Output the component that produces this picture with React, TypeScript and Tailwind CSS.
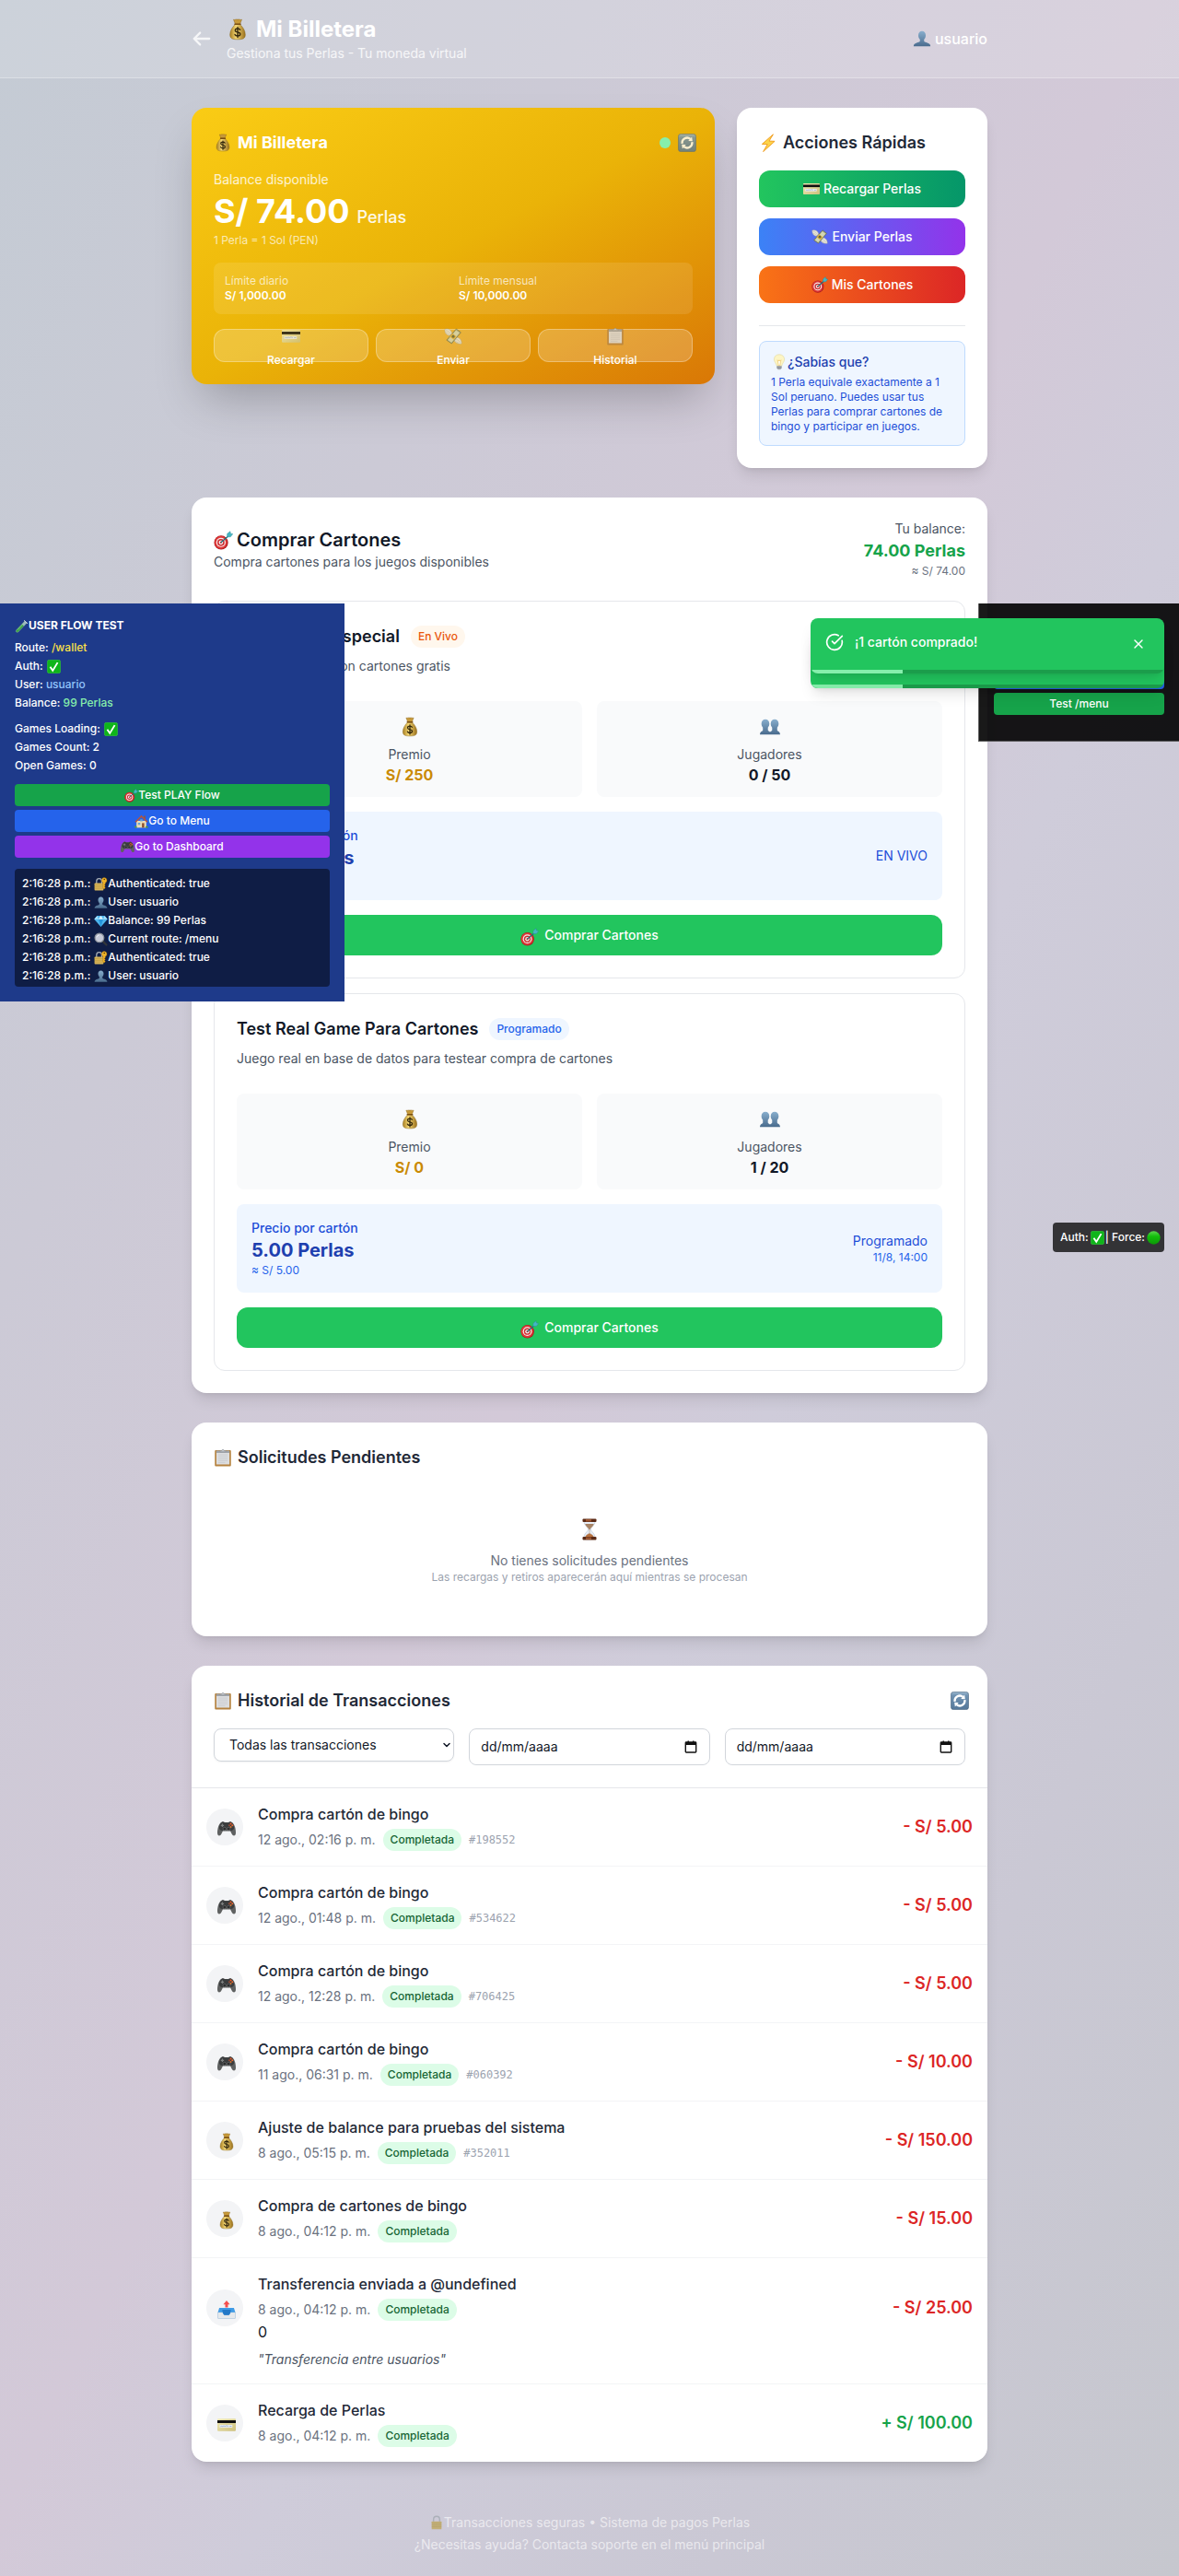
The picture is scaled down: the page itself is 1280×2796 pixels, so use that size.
import { useId, type ReactNode } from "react";
import { ChevronDown, CircleCheckBig, X } from "lucide-react";

type IconName =
  | "bag" | "card" | "wings" | "clipboard" | "refresh" | "target" | "zap" | "bulb"
  | "person" | "people" | "hourglass" | "gamepad" | "outbox" | "lock" | "lockKey"
  | "gem" | "search" | "house" | "tube" | "check" | "green";

const head = "M12 2.200c2.900 0 4.800 2.200 4.800 5.400 0 2.300-.9 4.300-2.100 5.400v2.100c0 .8 1.200 1.300 3.600 2.100 3 1 4.700 2.200 4.700 4.800H1c0-2.600 1.700-3.800 4.700-4.800 2.400-.8 3.600-1.300 3.600-2.100V13c-1.200-1.100-2.100-3.100-2.100-5.400 0-3.200 1.900-5.400 4.800-5.400z";

function drawing(name: IconName, id: string): ReactNode {
  const fill = `url(#${id})`;
  switch (name) {
    case "bag":
      return (
        <>
          <defs>
            <linearGradient id={id} x1="0" x2="1">
              <stop offset="0" stopColor="#a87f22" />
              <stop offset="0.4" stopColor="#f5d774" />
              <stop offset="1" stopColor="#9a701c" />
            </linearGradient>
          </defs>
          <path d="M7.500 1.200c1.500.700 2.500-.600 4.500 0 2-.600 3 .700 4.500 0l-2 5h-5z" fill="#c79a3a" stroke="#8d6519" strokeWidth=".5" />
          <path d="M9.300 6.500h5.400c3 3 5.600 6.800 5.600 11 0 4-2 5.300-8.300 5.300S3.700 21.500 3.700 17.500c0-4.200 2.600-8 5.600-11z" fill={fill} stroke="#8a6a1f" strokeWidth=".5" />
          <path d="M9 6.300h6" stroke="#7a4f12" strokeWidth="1.600" strokeLinecap="round" />
          <path d="M14.600 12.300c-.5-1-1.500-1.300-2.600-1.300-1.500 0-2.700.7-2.700 2 0 2.900 5.500 1.200 5.500 4 0 1.300-1.200 2.100-2.800 2.100-1.400 0-2.500-.5-2.900-1.600M12 9.600v11" fill="none" stroke="#33270c" strokeWidth="1.400" strokeLinecap="round" />
        </>
      );
    case "card":
      return (
        <>
          <defs>
            <linearGradient id={id} x1="0" y1="0" x2="1" y2="1">
              <stop offset="0" stopColor="#efe9b6" />
              <stop offset="1" stopColor="#cdc07c" />
            </linearGradient>
          </defs>
          <rect x="0" y="4" width="24" height="16" rx="1" fill={fill} />
          <path d="M0 6h24v3.500H0z" fill="#101010" />
          <rect x="3" y="12" width="16.500" height="3.500" fill="#e9edf2" />
          <path d="M4 14.200c1.500-1.500 2 .5 3.500-.5s2 .8 3.500-.3 2 .9 3.500 0M16 13.800h2.500" fill="none" stroke="#7f9cc4" strokeWidth=".8" />
        </>
      );
    case "wings":
      return (
        <>
          <path d="M1 3c4-1.500 8.500 0 9.500 6l-3.500 2C3 10.500 1 7.500 1 3z" fill="#e6e4da" stroke="#a9a794" strokeWidth=".6" />
          <path d="M2.500 4.500c3 .3 5 2 6.500 5M2.500 7c2 .5 3.500 1.500 5 3.300" fill="none" stroke="#b5b3a2" strokeWidth=".6" />
          <path d="M13.500 14c5-2 9.500 1.500 9.500 7.500-5 1-9-1-10.500-5.500z" fill="#e6e4da" stroke="#a9a794" strokeWidth=".6" />
          <path d="M14.500 15.500c3 .3 5.500 2.500 6.500 5M14 17.500c1.500 1.500 3 2.500 5 3" fill="none" stroke="#b5b3a2" strokeWidth=".6" />
          <path d="M16 2.500l6 4.500L10 21.500 3.500 17z" fill="#a9ad80" stroke="#5f6544" strokeWidth=".8" />
          <path d="M15.700 4.200l4.600 3.400L9.700 20l-4.500-3.300z" fill="#d3d6b4" />
          <path d="M11 8.200l5.300 4-3.500 4.300-5.400-4z" fill="#e0b440" />
          <circle cx="12" cy="12.200" r="1.900" fill="#62643d" />
        </>
      );
    case "clipboard":
      return (
        <>
          <rect x="1.500" y="2.500" width="21" height="21" rx="1.200" fill="#b5823e" />
          <path d="M3.500 4h17v17h-17z" fill="#dcdddf" />
          <path d="M6 8.500h12M6 11h12M6 13.500h12M6 16h12M6 18.500h9" stroke="#c6c9cd" strokeWidth=".9" />
          <path d="M3.500 3h17v3h-17z" fill="#9fa4aa" />
          <path d="M8.500 4.500V3h2a1.500 1.500 0 013 0h2v1.500z" fill="#c4c8cd" stroke="#80858c" strokeWidth=".5" />
        </>
      );
    case "refresh":
      return (
        <>
          <defs>
            <linearGradient id={id} x1="0" y1="0" x2="0" y2="1">
              <stop offset="0" stopColor="#9db9d0" />
              <stop offset="0.200" stopColor="#6f92b2" />
              <stop offset="1" stopColor="#547799" />
            </linearGradient>
          </defs>
          <rect x=".5" y=".5" width="23" height="23" rx="3.500" fill={fill} stroke="#4b6680" strokeWidth=".8" />
          <path d="M5.500 13a6.600 6.600 0 0110.700-6M18.500 11a6.600 6.600 0 01-10.700 6" fill="none" stroke="#fff" strokeWidth="2.700" />
          <path d="M13.500 9.700L19 10l-.8-5.800zM10.500 14.300L5 14l.8 5.800z" fill="#fff" />
        </>
      );
    case "target":
      return (
        <>
          <circle cx="9.200" cy="14.800" r="8.700" fill="#a81a1f" />
          <circle cx="8.900" cy="14.600" r="7.900" fill="#e03a3a" />
          <circle cx="9" cy="14.600" r="5.800" fill="#f5efee" />
          <circle cx="9" cy="14.600" r="4.400" fill="#cf2a2e" />
          <circle cx="9" cy="14.600" r="2.700" fill="#f5efee" />
          <circle cx="9" cy="14.600" r="1.200" fill="#c22126" />
          <path d="M9 14.600L19 6" stroke="#21717c" strokeWidth="1.500" />
          <path d="M16.600 7.800l.2-4L20.500.8l.5 2.800 2.800.5-3 3.600z" fill="#45b6c3" stroke="#2c8793" strokeWidth=".5" />
        </>
      );
    case "zap":
      return <path d="M18.500 1L4 13.700l7 .3L5.500 23.500 20.500 10l-7.300-.3z" fill="#fcd34b" stroke="#f09a1c" strokeWidth="1.100" strokeLinejoin="round" />;
    case "bulb":
      return (
        <>
          <path d="M12 1c4.700 0 7.500 3.200 7.500 7.200 0 3.600-3.200 5.400-3.800 9.300H8.300c-.6-3.900-3.800-5.700-3.800-9.300C4.500 4.200 7.300 1 12 1z" fill="#fdf5c4" stroke="#dcd49a" strokeWidth=".7" />
          <path d="M9.500 9l1.500 8h2l1.500-8-1.500 1.500L12 9l-1 1.500z" fill="#fffef0" stroke="#e6b54d" strokeWidth=".7" />
          <path d="M8.500 17.500h7v3.200L13.700 23h-3.400l-1.800-2.300z" fill="#aeb2b8" />
          <path d="M8.500 18.700h7M8.800 20.600h6.400" stroke="#6d7278" strokeWidth=".7" />
        </>
      );
    case "person":
    case "people":
      return (
        <>
          <defs>
            <linearGradient id={id} x1="0" y1="0" x2="0" y2="1">
              <stop offset="0" stopColor="#88aecd" />
              <stop offset="1" stopColor="#496b8d" />
            </linearGradient>
          </defs>
          {name === "person" ? (
            <path d={head} fill={fill} />
          ) : (
            <path d="M6.500 3c2.700 0 4.700 1.800 4.700 5.200 0 2-.8 3.500-1.700 4.500v3c0 1 1.500 1.500 2.500 2.300 1-.8 2.500-1.300 2.500-2.300v-3c-.9-1-1.700-2.500-1.700-4.500C12.800 4.800 14.800 3 17.500 3s4.700 1.800 4.700 5.200c0 2-.8 3.500-1.700 4.500v3c0 1.300 3.500 1.500 3.500 5.300H0c0-3.800 3.500-4 3.500-5.300v-3c-.9-1-1.700-2.500-1.700-4.500C1.800 4.800 3.800 3 6.500 3z" fill={fill} />
          )}
        </>
      );
    case "hourglass":
      return (
        <>
          <path d="M6 3h12c0 5-4.500 6.500-4.500 9S18 16 18 21H6c0-5 4.500-6.500 4.500-9S6 8 6 3z" fill="#e8eff8" stroke="#b8c3d2" strokeWidth=".6" />
          <path d="M7.200 6h9.600c-.8 3-3.600 4.200-4.400 6.200h-.8C10.800 10.200 8 9 7.200 6z" fill="#a78466" />
          <path d="M12 12v4.500c2.300.7 4 2 4.500 4h-9c.5-2 2.200-3.300 4.500-4" fill="#b9713c" stroke="#9b6640" strokeWidth=".4" />
          <rect x="4.500" y=".5" width="15" height="3.500" rx="1" fill="#5b2b16" />
          <path d="M8 1v2.500h6V1z" fill="#9a5430" />
          <rect x="4.500" y="20" width="15" height="3.500" rx="1" fill="#5b2b16" />
          <path d="M8 20.500V23h6v-2.500z" fill="#9a5430" />
        </>
      );
    case "gamepad":
      return (
        <>
          <path d="M5 3.500c1.500-1.500 3.500-1 4.500 0h5c1-1 3-1.500 4.500 0 3.500 2 5 9 5 13.500 0 4.500-3.300 5-5.100 2l-2-4H7.100l-2 4C3.300 22 0 21.500 0 17 0 12.500 1.500 5.500 5 3.500z" fill="#5f6161" />
          <path d="M5.500 3.600c1.300-1 3-.7 4 .4h5c1-1.100 2.700-1.400 4-.4 1.900 1 3.100 4.700 3.300 7.700-2 3.500-4.300 3.500-6.300 2.200h-7c-2 1.300-4.300 1.300-6.300-2.200.2-3 1.400-6.700 3.300-7.700z" fill="#3a3c3d" />
          <path d="M6.500 5.500v4M4.500 7.500h4" stroke="#7d8080" strokeWidth="1.500" />
          <circle cx="17.500" cy="5.500" r="1.200" fill="#ef5a24" />
          <circle cx="17.500" cy="9.500" r="1.200" fill="#d8752f" />
          <circle cx="15.500" cy="7.500" r="1.200" fill="#9a4a36" />
          <circle cx="19.500" cy="7.500" r="1.200" fill="#f0672f" />
          <circle cx="9.300" cy="12" r="2.100" fill="#2a2b2c" stroke="#7b7d7e" strokeWidth=".6" />
          <circle cx="14.700" cy="12" r="2.100" fill="#2a2b2c" stroke="#7b7d7e" strokeWidth=".6" />
        </>
      );
    case "outbox":
      return (
        <>
          <path d="M2.500 9.500h19L23.500 16v6.500a1 1 0 01-1 1h-21a1 1 0 01-1-1V16z" fill="#3f9be6" />
          <path d="M.5 15.500h6c1 0 1.500 3.500 3 3.500h5c1.500 0 2-3.500 3-3.500h6v7a1 1 0 01-1 1h-21a1 1 0 01-1-1z" fill="#e6e9ec" stroke="#c7ccd1" strokeWidth=".4" />
          <path d="M6.500 12h11c0 3-1.500 7-3 7h-5c-1.500 0-3-4-3-7z" fill="#2378c7" />
          <path d="M12 0l4.300 5.200h-2.500V9h-3.600V5.200H7.700z" fill="#f5504e" />
        </>
      );
    case "lock":
      return (
        <>
          <path d="M7 11V7a5 5 0 0110 0v4" fill="none" stroke="#9fa6ad" strokeWidth="2.200" />
          <rect x="4" y="10" width="16" height="13" rx="1" fill="#bfa550" />
          <path d="M4 13h16M4 16h16M4 19h16" stroke="#9c812e" strokeWidth=".6" />
        </>
      );
    case "lockKey":
      return (
        <>
          <path d="M4.500 11V7a4.500 4.500 0 019 0v4" fill="none" stroke="#aab1b8" strokeWidth="2" />
          <rect x="1" y="10.500" width="15.500" height="12.500" rx="1" fill="#d9b65a" />
          <path d="M1 13.500h15.500M1 16.500h15.500M1 19.500h15.500" stroke="#a98733" strokeWidth=".7" />
          <path d="M18 .8a4.700 4.700 0 011.700 9V12l-1.500 1.500 1.500 1.700-1.500 1.600 1.500 1.700-2.200 2.500-2-2.200V9.500A4.700 4.700 0 0118 .8z" fill="#f0b429" stroke="#a46f0c" strokeWidth=".6" />
          <circle cx="18" cy="4" r="1.300" fill="#5c3d08" />
        </>
      );
    case "gem":
      return (
        <>
          <path d="M5.500 3h13L23.500 9 12 22.500.5 9z" fill="#4eb5ec" />
          <path d="M5.500 3L8 9l4-6 4 6 2.500-6L23.500 9H.5z" fill="#a8e0fb" />
          <path d="M8 9h8l-4 13.500z" fill="#2596dc" />
          <path d="M12 3l4 6H8z" fill="#d8f2fe" />
        </>
      );
    case "search":
      return (
        <>
          <path d="M15 15l6.500 6.500" stroke="#31353a" strokeWidth="3.600" strokeLinecap="round" />
          <circle cx="9.500" cy="9.500" r="7.800" fill="#c7cad8" stroke="#8b9199" strokeWidth="1.800" />
          <path d="M5 8.500a5 5 0 014-3.700" fill="none" stroke="#f1f3f8" strokeWidth="1.300" />
        </>
      );
    case "house":
      return (
        <>
          <path d="M3.500 11h17v12h-17z" fill="#ecdcb4" />
          <path d="M16.500 2.500h2.500v6l-2.500-2.300z" fill="#96543c" />
          <path d="M.8 12.500L12 1l11.200 11.500-1.700 1.300L12 4.700l-9.500 9.100z" fill="#b5533c" />
          <path d="M13 15h4v8h-4z" fill="#8a4f2e" />
          <path d="M6 14.500h4V18H6zM10 8.500h4V12h-4z" fill="#69a3cf" />
          <path d="M.5 20.500c1.500-2 3.500-1 4 2.500h-4zM19 23c0-3 2.500-4 4.500-2v2z" fill="#5a9a41" />
        </>
      );
    case "tube":
      return (
        <>
          <path d="M17.500 3.500l3.500 3L6 22.300c-2.500 1.700-5-.5-3.500-3z" fill="#3aa345" stroke="#93b8a0" strokeWidth=".8" />
          <path d="M17.500 3.500l3.500 3-5 5.300-3.500-3z" fill="#9db9bf" />
          <path d="M16.500 2.500L22 7.300" stroke="#d3dce2" strokeWidth="1.600" strokeLinecap="round" />
          <path d="M5 18.500l9-9.500" stroke="#a6eaa9" strokeWidth=".9" />
        </>
      );
    case "check":
      return (
        <>
          <rect x=".5" y=".5" width="23" height="23" rx="3.500" fill="#0fb51a" stroke="#3acb43" strokeWidth=".9" />
          <path d="M5.500 12.500l4.500 6.500 8.500-14" fill="none" stroke="#fff" strokeWidth="3" />
        </>
      );
    case "green":
      return (
        <>
          <defs>
            <linearGradient id={id} x1="0" y1="0" x2="0" y2="1">
              <stop offset="0" stopColor="#5bd44e" />
              <stop offset="0.400" stopColor="#12bd0b" />
              <stop offset="1" stopColor="#0c9807" />
            </linearGradient>
          </defs>
          <circle cx="12" cy="12" r="11.500" fill={fill} />
        </>
      );
  }
}

function Icon({ name, className }: { name: IconName; className: string }) {
  const id = useId();
  return (
    <svg viewBox="0 0 24 24" aria-hidden="true" className={`inline-block shrink-0 ${className}`}>
      {drawing(name, id)}
    </svg>
  );
}

const walletActions: { icon: IconName; label: string }[] = [
  { icon: "card", label: "Recargar" },
  { icon: "wings", label: "Enviar" },
  { icon: "clipboard", label: "Historial" },
];

function WalletCard() {
  return (
    <section className="rounded-2xl bg-[linear-gradient(to_bottom_right,#facc15,#eab308_50%,#d97706)] p-6 text-white shadow-2xl lg:col-span-2">
      <div className="flex items-center justify-between">
        <h2 className="flex items-center gap-1.5 text-lg font-bold">
          <Icon name="bag" className="size-5" />
          Mi Billetera
        </h2>
        <div className="-mr-1 flex items-center gap-2">
          <span className="size-3 rounded-full bg-[#86efac]" />
          <button type="button" aria-label="Actualizar balance" className="flex opacity-80">
            <Icon name="refresh" className="size-5" />
          </button>
        </div>
      </div>
      <p className="mt-4 text-sm text-white/80">Balance disponible</p>
      <p className="mt-1 flex h-10 items-baseline gap-2 text-4xl font-bold">
        S/ 74.00 <span className="text-lg font-medium text-white/90">Perlas</span>
      </p>
      <p className="mt-1 text-xs text-white/70">1 Perla = 1 Sol (PEN)</p>
      <dl className="mt-4 grid grid-cols-2 gap-3 rounded-lg bg-white/10 p-3 text-xs">
        <div>
          <dt className="text-white/70">Límite diario</dt>
          <dd className="font-semibold">S/ 1,000.00</dd>
        </div>
        <div>
          <dt className="text-white/70">Límite mensual</dt>
          <dd className="font-semibold">S/ 10,000.00</dd>
        </div>
      </dl>
      <div className="mt-4 grid grid-cols-3 gap-2">
        {walletActions.map((a) => (
          <button key={a.label} type="button" className="flex h-9 flex-col items-center justify-center gap-1 rounded-xl border border-white/30 bg-white/20 text-xs font-medium">
            <span className="flex h-7 shrink-0 items-center opacity-80">
              <Icon name={a.icon} className="size-5" />
            </span>
            <span className="shrink-0">{a.label}</span>
          </button>
        ))}
      </div>
    </section>
  );
}

const quickActions: { icon: IconName; label: string; color: string }[] = [
  { icon: "card", label: "Recargar Perlas", color: "bg-[linear-gradient(to_right,#22c55e,#059669)]" },
  { icon: "wings", label: "Enviar Perlas", color: "bg-[linear-gradient(to_right,#3b82f6,#9333ea)]" },
  { icon: "target", label: "Mis Cartones", color: "bg-[linear-gradient(to_right,#f97316,#dc2626)]" },
];

function QuickActions() {
  return (
    <section className="rounded-2xl bg-white p-6 shadow-lg">
      <h2 className="flex items-center gap-1.5 text-lg font-semibold text-[#1f2937]">
        <Icon name="zap" className="size-5" />
        Acciones Rápidas
      </h2>
      <div className="mt-4 flex flex-col gap-3">
        {quickActions.map((a) => (
          <button key={a.label} type="button" className={`flex h-10 items-center justify-center gap-1 rounded-xl text-sm font-medium text-white ${a.color}`}>
            <Icon name={a.icon} className="size-[18px]" />
            {a.label}
          </button>
        ))}
      </div>
      <div className="mt-6 border-t border-[#e5e7eb] pt-4">
        <div className="rounded-lg border border-[#bfdbfe] bg-[#eff6ff] p-3">
          <h3 className="flex items-center text-sm font-medium text-[#1e40af]">
            <Icon name="bulb" className="size-[18px]" />
            ¿Sabías que?
          </h3>
          <p className="mt-1 text-xs text-[#1d4ed8]">
            1 Perla equivale exactamente a 1 Sol peruano. Puedes usar tus Perlas para comprar cartones de bingo y participar en juegos.
          </p>
        </div>
      </div>
    </section>
  );
}

type Game = {
  title: string;
  status: string;
  badge: string;
  description: string;
  prize: string;
  players: string;
  when: string;
  date?: string;
};

const games: Game[] = [
  {
    title: "Bingo Extra Especial",
    status: "En Vivo",
    badge: "bg-[#fff7ed] text-[#ea580c]",
    description: "Juego especial con cartones gratis",
    prize: "S/ 250",
    players: "0 / 50",
    when: "EN VIVO",
  },
  {
    title: "Test Real Game Para Cartones",
    status: "Programado",
    badge: "bg-[#eff6ff] text-[#2563eb]",
    description: "Juego real en base de datos para testear compra de cartones",
    prize: "S/ 0",
    players: "1 / 20",
    when: "Programado",
    date: "11/8, 14:00",
  },
];

function Stat({ icon, label, value, color }: { icon: IconName; label: string; value: string; color: string }) {
  return (
    <div className="rounded-lg bg-[#f9fafb] p-3 text-center">
      <div className="flex h-8 items-center justify-center">
        <Icon name={icon} className="size-[22px]" />
      </div>
      <p className="mt-1 text-sm text-[#4b5563]">{label}</p>
      <p className={`text-base font-bold ${color}`}>{value}</p>
    </div>
  );
}

function GameCard({ game }: { game: Game }) {
  return (
    <article className="rounded-xl border border-[#e5e7eb] p-6">
      <div className="flex items-center gap-3">
        <h3 className="text-lg font-semibold text-[#111827]">{game.title}</h3>
        <span className={`rounded-full px-2 py-1 text-xs font-medium ${game.badge}`}>{game.status}</span>
      </div>
      <p className="mt-2 text-sm text-[#4b5563]">{game.description}</p>
      <div className="mt-7 grid grid-cols-2 gap-4">
        <Stat icon="bag" label="Premio" value={game.prize} color="text-[#ca8a04]" />
        <Stat icon="people" label="Jugadores" value={game.players} color="text-[#111827]" />
      </div>
      <div className="mt-4 flex items-center justify-between rounded-lg bg-[#eff6ff] p-4">
        <div>
          <p className="text-sm font-medium text-[#1d4ed8]">Precio por cartón</p>
          <p className="text-xl font-bold text-[#1e40af]">5.00 Perlas</p>
          <p className="text-xs text-[#2563eb]">≈ S/ 5.00</p>
        </div>
        <div className="text-right">
          <p className="text-sm text-[#1d4ed8]">{game.when}</p>
          {game.date && <p className="text-xs text-[#2563eb]">{game.date}</p>}
        </div>
      </div>
      <button type="button" className="mt-4 flex h-11 w-full items-center justify-center gap-1.5 rounded-xl bg-[#22c55e] text-sm font-medium text-white">
        <Icon name="target" className="mt-1 size-5" />
        Comprar Cartones
      </button>
    </article>
  );
}

function BuyCards() {
  return (
    <section className="rounded-2xl bg-white p-6 shadow-lg">
      <div className="flex items-center justify-between">
        <div>
          <h2 className="flex items-center gap-1 text-xl font-semibold text-[#111827]">
            <Icon name="target" className="size-[21px]" />
            Comprar Cartones
          </h2>
          <p className="text-sm text-[#4b5563]">Compra cartones para los juegos disponibles</p>
        </div>
        <div className="text-right">
          <p className="text-sm text-[#4b5563]">Tu balance:</p>
          <p className="text-lg font-bold text-[#16a34a]">74.00 Perlas</p>
          <p className="text-xs text-[#6b7280]">≈ S/ 74.00</p>
        </div>
      </div>
      <div className="mt-6 flex flex-col gap-4">
        {games.map((g) => (
          <GameCard key={g.title} game={g} />
        ))}
      </div>
    </section>
  );
}

function PendingRequests() {
  return (
    <section className="rounded-2xl bg-white p-6 shadow-lg">
      <h2 className="flex items-center gap-1.5 text-lg font-semibold text-[#1f2937]">
        <Icon name="clipboard" className="size-5" />
        Solicitudes Pendientes
      </h2>
      <div className="mt-4 py-8 text-center">
        <div className="flex h-8 items-center justify-center">
          <Icon name="hourglass" className="size-6" />
        </div>
        <p className="mt-2 text-sm text-[#6b7280]">No tienes solicitudes pendientes</p>
        <p className="text-xs text-[#9ca3af]">Las recargas y retiros aparecerán aquí mientras se procesan</p>
      </div>
    </section>
  );
}

type Transaction = {
  icon: IconName;
  title: string;
  date: string;
  code?: string;
  amount: string;
  extra?: { count: string; note: string };
};

const transactions: Transaction[] = [
  { icon: "gamepad", title: "Compra cartón de bingo", date: "12 ago., 02:16 p. m.", code: "#198552", amount: "- S/ 5.00" },
  { icon: "gamepad", title: "Compra cartón de bingo", date: "12 ago., 01:48 p. m.", code: "#534622", amount: "- S/ 5.00" },
  { icon: "gamepad", title: "Compra cartón de bingo", date: "12 ago., 12:28 p. m.", code: "#706425", amount: "- S/ 5.00" },
  { icon: "gamepad", title: "Compra cartón de bingo", date: "11 ago., 06:31 p. m.", code: "#060392", amount: "- S/ 10.00" },
  { icon: "bag", title: "Ajuste de balance para pruebas del sistema", date: "8 ago., 05:15 p. m.", code: "#352011", amount: "- S/ 150.00" },
  { icon: "bag", title: "Compra de cartones de bingo", date: "8 ago., 04:12 p. m.", amount: "- S/ 15.00" },
  {
    icon: "outbox",
    title: "Transferencia enviada a @undefined",
    date: "8 ago., 04:12 p. m.",
    amount: "- S/ 25.00",
    extra: { count: "0", note: '"Transferencia entre usuarios"' },
  },
  { icon: "card", title: "Recarga de Perlas", date: "8 ago., 04:12 p. m.", amount: "+ S/ 100.00" },
];

function DateField({ label }: { label: string }) {
  return (
    <label className="flex h-10 items-center rounded-lg border border-[#d1d5db] bg-white px-3">
      <span className="sr-only">{label}</span>
      <input type="text" placeholder="dd/mm/aaaa" className="w-full min-w-0 flex-1 text-sm text-[#111827] outline-none placeholder:text-[#111827]" />
      <svg viewBox="0 0 14 14" aria-hidden="true" className="mr-px size-3.5 shrink-0">
        <path d="M2 2h10a.7.7 0 01.7.7v9.600a.7.7 0 01-.7.7H2a.7.7 0 01-.7-.7V2.700A.7.7 0 012 2z" fill="none" stroke="#111" strokeWidth="1.400" />
        <path d="M1.500 2h11v3h-11zM3.500.5h1.500V2H3.500zM9 .5h1.500V2H9z" fill="#111" />
      </svg>
    </label>
  );
}

function History() {
  return (
    <section className="overflow-hidden rounded-2xl bg-white shadow-lg">
      <div className="border-b border-[#e5e7eb] p-6">
        <div className="flex items-center justify-between">
          <h2 className="flex items-center gap-1.5 text-lg font-semibold text-[#1f2937]">
            <Icon name="clipboard" className="size-5" />
            Historial de Transacciones
          </h2>
          <button type="button" aria-label="Actualizar historial" className="-mr-1 flex">
            <Icon name="refresh" className="size-5" />
          </button>
        </div>
        <div className="mt-4 grid grid-cols-3 items-start gap-4">
          <label className="relative flex h-9">
            <span className="sr-only">Tipo de transacción</span>
            <select className="w-full appearance-none rounded-lg border border-[#d1d5db] bg-white pr-6 pl-4 text-sm text-[#111827] shadow-xs">
              <option>Todas las transacciones</option>
            </select>
            <ChevronDown aria-hidden="true" className="pointer-events-none absolute top-3 right-0.5 size-3 text-[#111827]" strokeWidth={3} />
          </label>
          <DateField label="Desde" />
          <DateField label="Hasta" />
        </div>
      </div>
      <ul>
        {transactions.map((t, i) => (
          <li key={i} className="border-b border-[#f3f4f6] p-4 last:border-b-0">
            <div className="flex items-center gap-4">
              <span className="flex size-10 shrink-0 items-center justify-center rounded-full bg-[#f3f4f6] pt-1 pl-1">
                <Icon name={t.icon} className="size-5" />
              </span>
              <div className="min-w-0 flex-1">
                <p className="text-base font-medium text-[#1f2937]">{t.title}</p>
                <div className="mt-1 flex items-center gap-2">
                  <span className="text-sm text-[#6b7280]">{t.date}</span>
                  <span className="rounded-full bg-[#dcfce7] px-2 py-1 text-xs font-medium text-[#166534]">Completada</span>
                  {t.code && <span className="font-['DejaVu_Sans_Mono',monospace] text-xs text-[#9ca3af]">{t.code}</span>}
                </div>
                {t.extra && <p className="text-base text-[#111827]">{t.extra.count}</p>}
              </div>
              <p className={`text-lg font-semibold ${t.amount.startsWith("+") ? "text-[#16a34a]" : "text-[#dc2626]"}`}>{t.amount}</p>
            </div>
            {t.extra && <p className="mt-2 pl-14 text-sm text-[#4b5563] italic">{t.extra.note}</p>}
          </li>
        ))}
      </ul>
    </section>
  );
}

const logs: { icon: IconName; text: string }[] = [
  { icon: "lockKey", text: "Authenticated: true" },
  { icon: "person", text: "User: usuario" },
  { icon: "gem", text: "Balance: 99 Perlas" },
  { icon: "search", text: "Current route: /menu" },
  { icon: "lockKey", text: "Authenticated: true" },
  { icon: "person", text: "User: usuario" },
];

const flowButtons: { icon: IconName; label: string; color: string }[] = [
  { icon: "target", label: "Test PLAY Flow", color: "bg-[#16a34a]" },
  { icon: "house", label: "Go to Menu", color: "bg-[#2563eb]" },
  { icon: "gamepad", label: "Go to Dashboard", color: "bg-[#9333ea]" },
];

function FlowTest() {
  return (
    <aside className="absolute top-[655px] left-0 z-10 w-[374px] bg-[#1e3a8a] p-4 text-xs font-medium text-white">
      <h2 className="flex items-center font-bold">
        <Icon name="tube" className="size-[15px]" />
        USER FLOW TEST
      </h2>
      <div className="mt-2 flex flex-col gap-1">
        <p>Route: <span className="text-[#fde047]">/wallet</span></p>
        <p className="flex items-center gap-1">Auth: <Icon name="check" className="size-[15px]" /></p>
        <p>User: <span className="text-[#93c5fd]">usuario</span></p>
        <p>Balance: <span className="text-[#86efac]">99 Perlas</span></p>
      </div>
      <div className="mt-3 flex flex-col gap-1">
        <p className="flex items-center gap-1">Games Loading: <Icon name="check" className="size-[15px]" /></p>
        <p>Games Count: 2</p>
        <p>Open Games: 0</p>
      </div>
      <div className="mt-3 flex flex-col gap-1">
        {flowButtons.map((b) => (
          <button key={b.label} type="button" className={`flex h-6 items-center justify-center rounded-sm ${b.color}`}>
            <Icon name={b.icon} className="size-[15px]" />
            {b.label}
          </button>
        ))}
      </div>
      <ul className="mt-3 flex flex-col gap-1 rounded-sm bg-black/50 px-2 pt-2 pb-1">
        {logs.map((l, i) => (
          <li key={i} className="flex items-center">
            <span className="mr-1">2:16:28 p.m.:</span>
            <Icon name={l.icon} className="size-[15px]" />
            {l.text}
          </li>
        ))}
      </ul>
    </aside>
  );
}

function ToastBar() {
  return (
    <div className="h-1 bg-black/20">
      <div className="h-full w-[26%] bg-[#86efac]" />
    </div>
  );
}

function Toasts() {
  return (
    <>
      <aside className="absolute top-[655px] right-0 z-10 flex h-[150px] w-[218px] flex-col justify-end gap-1 border-b border-l border-white/30 bg-black/90 px-4 pb-7 text-xs font-medium text-white">
        <button type="button" aria-label="Test" className="h-6 rounded-sm bg-[#2563eb]" />
        <button type="button" className="h-6 rounded-sm bg-[#16a34a]">Test /menu</button>
      </aside>
      <div className="absolute top-[687px] right-4 z-20 flex h-[60px] w-96 flex-col justify-end overflow-hidden rounded-lg bg-[#22c55e] shadow-lg">
        <ToastBar />
      </div>
      <div role="status" className="absolute top-[671px] right-4 z-20 w-96 overflow-hidden rounded-lg bg-[#22c55e] text-white shadow-lg">
        <div className="flex items-start gap-3 p-4">
          <CircleCheckBig aria-hidden="true" className="size-5 shrink-0" strokeWidth={2} />
          <p className="flex-1 text-sm font-medium">¡1 cartón comprado!</p>
          <button type="button" aria-label="Cerrar" className="flex size-6 items-center justify-center">
            <X className="size-4" strokeWidth={2} />
          </button>
        </div>
        <ToastBar />
      </div>
      <div className="absolute top-[1327px] right-4 z-10 flex h-8 items-center gap-0.5 rounded-sm bg-black/75 pr-1 pl-2 text-xs font-medium text-white">
        Auth:
        <span className="flex items-center">
          <Icon name="check" className="mr-px size-[15px]" />| Force:
        </span>
        <Icon name="green" className="size-[15px]" />
      </div>
    </>
  );
}

export default function App() {
  return (
    <div className="relative overflow-x-hidden bg-[linear-gradient(to_bottom_right,#c4cbd4_0%,#cccad6_25%,#d3c9d8_49%,#cfccda_60%,#cac8d4_80%,#c6c7ce_100%)] font-['Inter',sans-serif] text-[#111827]">
      <header className="border-b border-white/30 bg-white/15">
        <div className="mx-auto flex max-w-4xl items-center justify-between px-4 py-4">
          <div className="flex items-center gap-4">
            <a href="#" aria-label="Volver" className="text-white/80">
              <svg viewBox="0 0 24 24" fill="none" stroke="currentColor" strokeWidth="2.500" strokeLinecap="round" strokeLinejoin="round" className="size-[22px]">
                <path d="M10 19l-7-7m0 0l7-7m-7 7h18" />
              </svg>
            </a>
            <div>
              <h1 className="flex items-center gap-2 text-2xl font-bold text-white">
                <Icon name="bag" className="size-6" />
                Mi Billetera
              </h1>
              <p className="text-sm text-white/80">Gestiona tus Perlas - Tu moneda virtual</p>
            </div>
          </div>
          <p className="flex items-center gap-1 text-base font-medium text-white">
            <Icon name="person" className="size-5" />
            usuario
          </p>
        </div>
      </header>
      <main className="mx-auto flex max-w-4xl flex-col gap-8 px-4 pt-8">
        <div className="grid grid-cols-1 items-start gap-6 lg:grid-cols-3">
          <WalletCard />
          <QuickActions />
        </div>
        <BuyCards />
        <PendingRequests />
        <History />
      </main>
      <footer className="flex flex-col gap-1 px-4 pt-14 pb-6 text-center text-sm text-white/60">
        <p className="flex items-center justify-center">
          <Icon name="lock" className="size-4 opacity-70" />
          Transacciones seguras • Sistema de pagos Perlas
        </p>
        <p>¿Necesitas ayuda? Contacta soporte en el menú principal</p>
      </footer>
      <FlowTest />
      <Toasts />
    </div>
  );
}
